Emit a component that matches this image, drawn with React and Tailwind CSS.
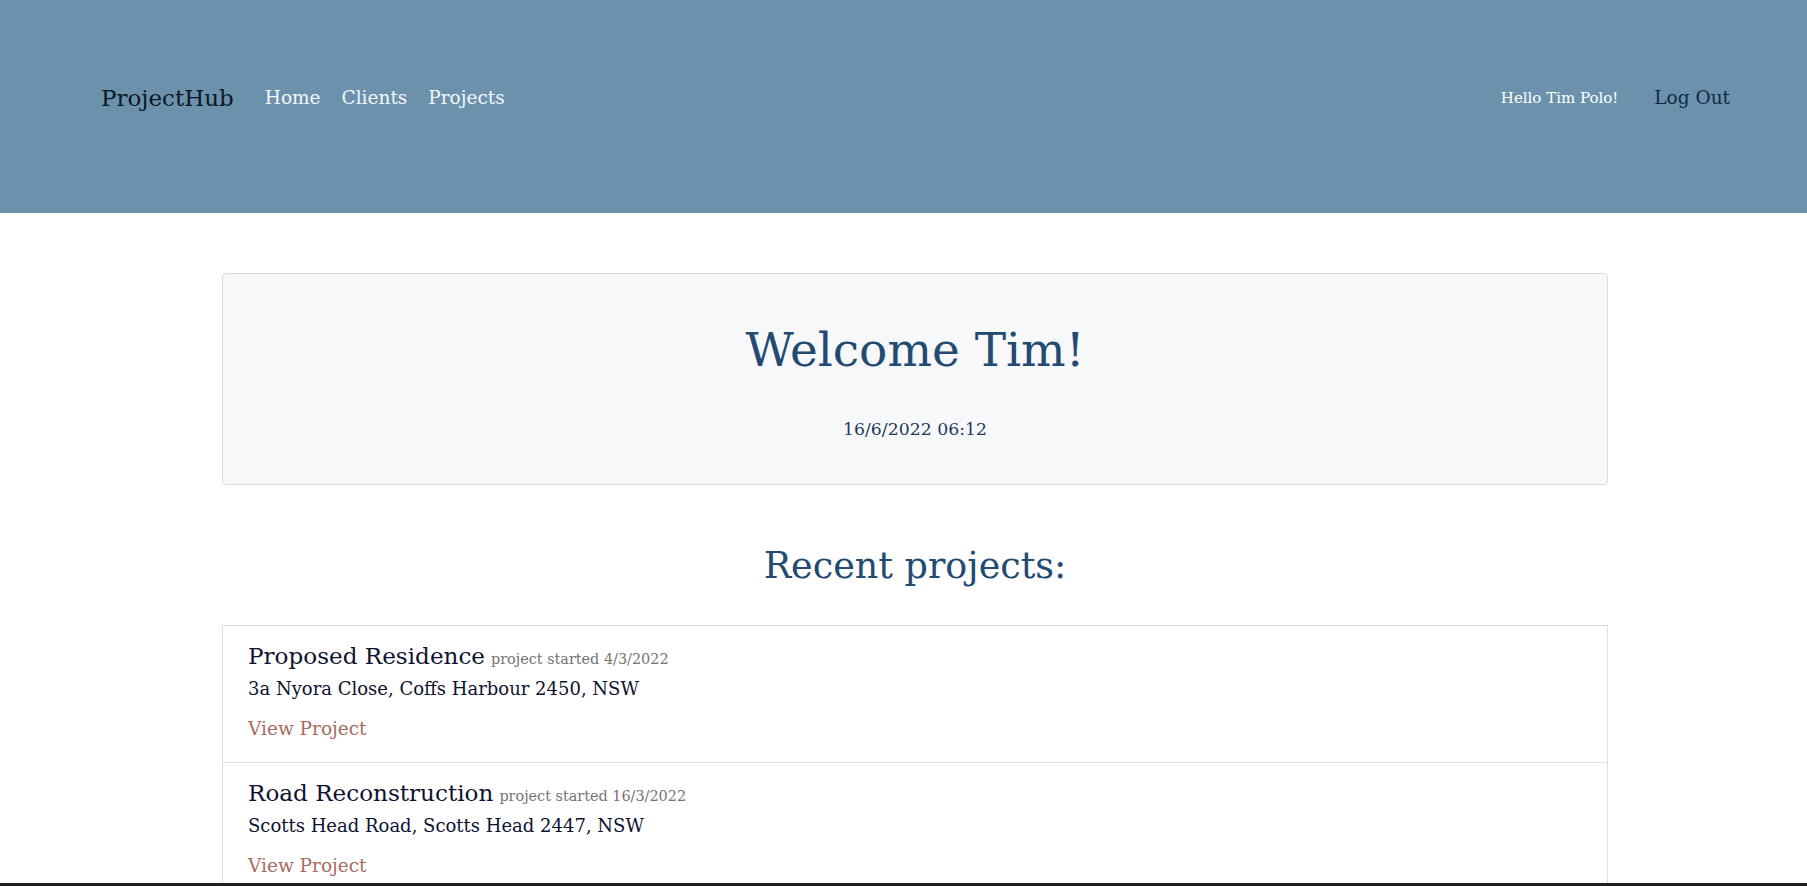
import React from "react";

const projects = [
  {
    name: "Proposed Residence",
    started: "4/3/2022",
    address: "3a Nyora Close, Coffs Harbour 2450, NSW",
  },
  {
    name: "Road Reconstruction",
    started: "16/3/2022",
    address: "Scotts Head Road, Scotts Head 2447, NSW",
  },
];

export default function App() {
  return (
    <div className="h-screen overflow-hidden bg-white font-['DejaVu_Serif',serif]">
      {/* Navbar */}
      <header className="h-[213px] bg-[#6b91ad] pt-[78px]">
        <nav className="flex items-center h-10 pl-[101px] pr-[77px]">
          <a href="#" className="text-[23px] text-[#0b1622] mr-[31px]">ProjectHub</a>
          <div className="flex items-center gap-[21px] text-[18.5px] text-[#f4f7fa]">
            <a href="#">Home</a>
            <a href="#">Clients</a>
            <a href="#">Projects</a>
          </div>
          <div className="ml-auto flex items-center gap-[36px]">
            <span className="text-[15px] text-white">Hello Tim Polo!</span>
            <a href="#" className="text-[18.5px] text-[#0f2745]">Log Out</a>
          </div>
        </nav>
      </header>

      <main className="w-[1386px] ml-[222px] pt-[60px]">
        {/* Welcome box */}
        <section className="h-[212px] rounded border border-[#dcdcdc] bg-[#f7f8fa] flex flex-col items-center pt-[46px]">
          <h1 className="text-[47px] leading-[60px] text-[#234a70]">Welcome Tim!</h1>
          <p className="mt-[37px] text-[17.3px] text-[#1d3a5c]">16/6/2022 06:12</p>
        </section>

        <h2 className="mt-[56px] text-center text-[36.5px] leading-[50px] text-[#234a70]">Recent projects:</h2>

        {/* Project list */}
        <ul className="mt-[34px] border border-[#dfdfdf]">
          {projects.map((p, i) => (
            <li key={p.name} className={"h-[136px] pl-[25px] pt-[13px] " + (i > 0 ? "border-t border-[#dfdfdf]" : "")}>
              <div className="flex items-baseline gap-[6px]">
                <span className="text-[23.1px] text-[#0e1230]">{p.name}</span>
                <span className="text-[14.4px] text-[#737373]">project started {p.started}</span>
              </div>
              <p className="mt-[1px] text-[18px] text-[#0e1230]">{p.address}</p>
              <a href="#" className="block mt-[13px] text-[18.5px] text-[#a86b62]">View Project</a>
            </li>
          ))}
        </ul>
      </main>

      <div className="fixed bottom-0 left-0 right-0 h-[3px] bg-[#1e1e1e]" />
    </div>
  );
}
